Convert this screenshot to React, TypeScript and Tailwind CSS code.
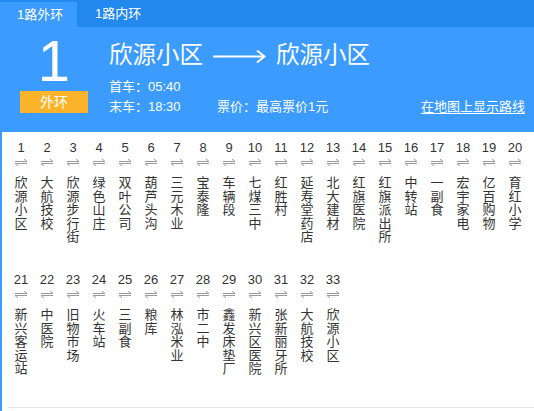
import React from "react";

const stops = [
  "欣源小区", "大航技校", "欣源步行街", "绿色山庄", "双叶公司", "葫芦头沟", "三元木业", "宝泰隆", "车辆段", "七煤三中",
  "红胜村", "延寿堂药店", "北大建材", "红旗医院", "红旗派出所", "中转站", "一副食", "宏宇家电", "亿百购物", "育红小学",
  "新兴客运站", "中医院", "旧物市场", "火车站", "三副食", "粮库", "林泓米业", "市二中", "鑫发床垫厂", "新兴区医院",
  "张新丽牙所", "大航技校", "欣源小区",
];

function TwoWay() {
  return (
    <svg width="12" height="7" viewBox="0 0 12 7" className="block">
      <path d="M0 2.5H12M12 2.5L9 0M0 4.5H12M0 4.5L3 7" stroke="#9a9a9a" strokeWidth="1" fill="none" />
    </svg>
  );
}

function LongArrow() {
  return (
    <svg width="53" height="15" viewBox="0 0 53 15" className="block">
      <path d="M0 7.5H51" stroke="#fff" strokeWidth="2.2" />
      <path d="M44 1.5L51.5 7.5L44 13.5" stroke="#fff" strokeWidth="2" fill="none" />
    </svg>
  );
}

export default function App() {
  return (
    <div className="w-[534px] h-[411px] overflow-hidden bg-white font-['Liberation_Sans','Noto_Sans_CJK_SC',sans-serif]">
      {/* tabs */}
      <div className="h-[27px] bg-[#2489ee] flex text-[13px] text-white">
        <div className="w-[77px] mt-[2px] bg-[#3b9bfe] pl-[17px] leading-[25px]">1路外环</div>
        <div className="pl-[18px] leading-[27px]">1路内环</div>
      </div>

      {/* header */}
      <div className="h-[105px] bg-[#3b9bfe] flex text-white">
        <div className="w-[68px] ml-[20px] pt-[5px] flex flex-col items-center">
          <div className="text-[58px] leading-[58px] h-[58px]">1</div>
          <div className="mt-[1px] w-[68px] h-[22px] bg-[#fbb429] text-[14px] leading-[22px] text-center">外环</div>
        </div>
        <div className="ml-[21px] flex-1 pr-[9px]">
          <div className="mt-[14px] flex items-center h-[28px] text-[23.5px] leading-[28px]">
            <span>欣源小区</span>
            <span className="mx-[10px] mt-[2px]"><LongArrow /></span>
            <span>欣源小区</span>
          </div>
          <div className="mt-[8px] text-[13px] leading-[20px]">首车：05:40</div>
          <div className="flex text-[13px] leading-[20px]">
            <span className="w-[108px]">末车：18:30</span>
            <span>票价：最高票价1元</span>
            <span className="ml-auto underline underline-offset-2">在地图上显示路线</span>
          </div>
        </div>
      </div>

      {/* stops */}
      <div className="h-[279px] bg-[#3b9bfe] pl-[2px]">
        <div className="h-full bg-white pl-[6px]">
          <div className="h-[276px] border-b border-[#e5e5e5] grid grid-cols-[repeat(20,26px)] grid-rows-[132px_132px] content-start">
            {stops.map((s, i) => (
              <div key={i} className="flex flex-col items-center pt-[8px] text-[#333]">
                <div className="text-[13px] leading-[16px] h-[16px]">{i + 1}</div>
                <div className="mt-[3px]"><TwoWay /></div>
                <div className="mt-[10px] flex flex-col items-center text-[13px] leading-[13.5px]">
                  {s.split("").map((c, j) => (
                    <span key={j}>{c}</span>
                  ))}
                </div>
              </div>
            ))}
          </div>
        </div>
      </div>
    </div>
  );
}
